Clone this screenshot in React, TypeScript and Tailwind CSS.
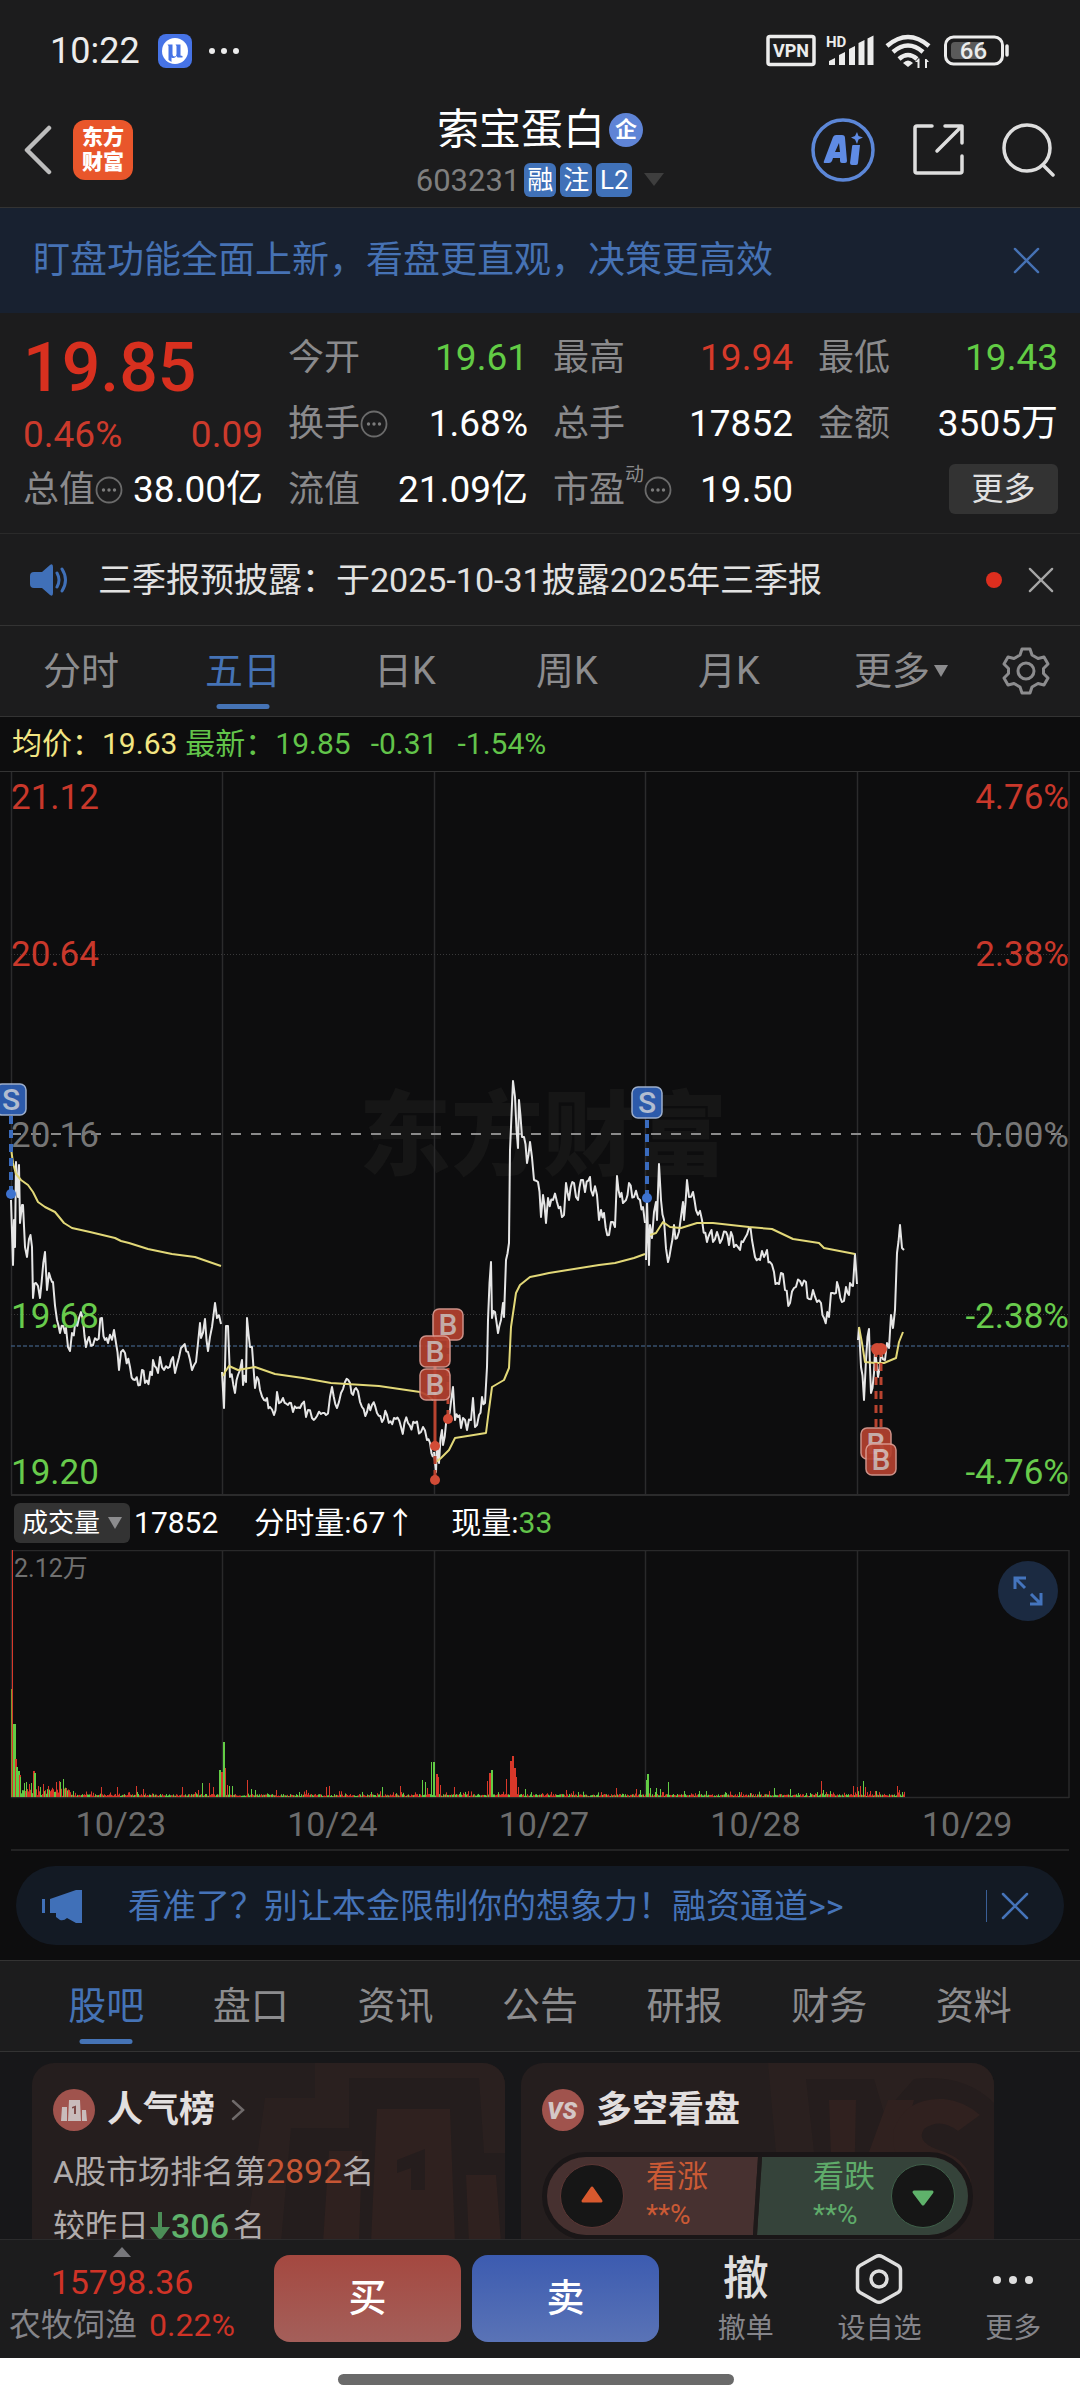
import type { ReactNode } from "react";

type Point = [number, number];

const quotes = [
  { label: "今开", value: "19.61", color: "text-[#62cc45]" },
  { label: "最高", value: "19.94", color: "text-[#d63a2a]" },
  { label: "最低", value: "19.43", color: "text-[#62cc45]" },
  { label: "换手", value: "1.68%", color: "text-white", info: true },
  { label: "总手", value: "17852", color: "text-white" },
  { label: "金额", value: "3505万", color: "text-white" },
  { label: "总值", value: "38.00亿", color: "text-white", info: true },
  { label: "流值", value: "21.09亿", color: "text-white" },
  { label: "市盈", value: "19.50", color: "text-white", info: true, sup: "动" },
];

const periods = ["分时", "五日", "日K", "周K", "月K"];
const sections = ["股吧", "盘口", "资讯", "公告", "研报", "财务", "资料"];
const dates = ["10/23", "10/24", "10/27", "10/28", "10/29"];

const price: Point[][] = [
  [[11,428],[13,493],[14,448],[15,475],[16,390],[18,425],[19,393],[20,451],[22,433],[23,433],[25,475],[27,485],[29,467],[32,475],[33,526],[36,511],[38,514],[40,526],[45,480],[47,518],[49,501],[52,510],[53,510],[57,548],[60,561],[65,561],[66,556],[70,579],[72,561],[79,546],[83,548],[86,575],[89,565],[93,573],[97,568],[102,546],[105,568],[108,571],[114,558],[116,571],[119,598],[121,580],[125,581],[130,595],[135,608],[140,613],[142,598],[145,611],[152,603],[153,588],[158,601],[160,585],[164,598],[168,596],[173,585],[175,601],[183,574],[188,580],[192,598],[196,590],[200,551],[201,566],[205,547],[208,579],[212,555],[215,531],[217,546],[221,552]],
  [[222,600],[224,636],[226,554],[228,554],[230,605],[235,621],[238,603],[240,598],[242,588],[243,613],[246,610],[247,546],[250,575],[252,575],[255,616],[257,605],[260,618],[264,628],[267,626],[270,635],[274,643],[277,620],[281,630],[283,626],[288,633],[291,631],[293,640],[300,636],[308,638],[312,646],[317,644],[321,642],[326,643],[330,625],[332,615],[337,636],[341,621],[345,610],[350,611],[353,623],[356,616],[362,635],[367,640],[372,633],[377,641],[382,650],[387,643],[394,646],[401,655],[408,651],[415,651],[421,660],[423,655],[427,668],[430,671],[433,685]],
  [[434,680],[436,700],[437,671],[439,691],[442,658],[443,673],[448,646],[453,615],[455,648],[458,645],[461,656],[465,648],[467,658],[471,648],[473,626],[475,655],[479,643],[482,625],[485,631],[487,595],[488,548],[491,490],[492,546],[495,540],[498,561],[501,548],[503,531],[504,545],[506,488],[509,471],[510,378],[513,309],[515,325],[518,376],[519,328],[522,365],[524,365],[527,391],[530,370],[534,408],[538,410],[541,445],[543,423],[546,451],[548,426],[553,428],[557,430],[562,445],[564,443],[566,411],[569,428],[574,411],[578,428],[581,408],[585,420],[590,405],[591,418],[597,423],[599,448],[601,438],[604,441],[609,463],[611,450],[615,455],[617,404],[620,425],[623,431],[626,428],[629,411],[634,425],[640,428],[643,435],[645,451]],
  [[646,488],[647,428],[649,493],[650,453],[652,466],[656,430],[657,448],[659,392],[661,428],[664,448],[668,490],[671,475],[674,453],[677,466],[683,430],[684,448],[687,408],[689,425],[693,420],[696,438],[702,448],[707,470],[710,461],[713,470],[717,460],[720,471],[726,460],[729,473],[731,460],[734,475],[740,478],[743,470],[749,456],[752,468],[755,485],[760,488],[762,479],[764,485],[767,478],[770,490],[774,500],[777,511],[781,501],[785,518],[790,531],[794,516],[800,509],[806,510],[809,527],[813,518],[817,530],[821,531],[824,546],[829,545],[831,521],[836,521],[837,510],[842,530],[846,515],[849,523],[850,511],[853,514],[855,482],[857,512]],
  [[858,568],[859,556],[861,595],[864,628],[866,588],[869,557],[870,595],[871,621],[874,601],[875,578],[878,605],[881,581],[885,588],[887,571],[889,576],[891,543],[893,556],[895,538],[897,481],[900,453],[902,476],[904,478]],
];

const average: Point[][] = [
  [[11,376],[13,391],[16,402],[21,408],[28,413],[33,420],[38,430],[45,435],[55,440],[64,451],[72,456],[90,460],[115,466],[121,469],[129,471],[148,477],[172,482],[195,485],[221,494]],
  [[223,604],[225,600],[229,594],[238,598],[255,595],[275,602],[303,606],[331,611],[379,614],[420,620],[427,623],[433,628]],
  [[436,690],[441,686],[449,678],[455,666],[486,661],[488,645],[492,615],[504,608],[509,596],[511,555],[516,521],[520,513],[530,505],[540,503],[549,501],[574,497],[599,493],[615,491],[634,486],[645,482]],
  [[650,463],[656,461],[663,450],[670,455],[681,456],[697,451],[713,451],[749,455],[772,457],[793,467],[819,471],[824,476],[855,482]],
  [[859,555],[862,571],[865,590],[875,591],[884,591],[896,586],[899,570],[903,560]],
];

// deterministic noise so that the chart looks the same on every load
function createRandom(seed: number) {
  let s = seed;
  return () => {
    s = (s * 16807) % 2147483647;
    return s / 2147483647;
  };
}

function smoothPath(points: Point[]) {
  return points.map(([x, y], i) => `${i ? "L" : "M"}${x} ${y}`).join("");
}

function tickPath(points: Point[], seed: number) {
  const rand = createRandom(seed);
  let d = "";
  points.forEach(([x, y], i) => {
    const next = points[i + 1];
    d += `${i ? "L" : "M"}${x} ${y}`;
    if (!next || next[0] - x < 3) return;
    const steps = Math.round((next[0] - x) / 2);
    for (let k = 1; k < steps; k++) {
      const t = k / steps;
      const ny = y + (next[1] - y) * t + (rand() - 0.5) * 16;
      d += `L${(x + (next[0] - x) * t).toFixed(1)} ${ny.toFixed(1)}`;
    }
  });
  return d;
}

const UP = "#d8382a";
const DOWN = "#62cc45";

const peaks: [number, number, string][] = [
  [14,73,DOWN],[15,38,UP],[16,30,DOWN],[18,26,DOWN],[19,22,UP],[20,20,DOWN],[24,14,DOWN],[26,15,DOWN],[29,13,UP],[31,14,DOWN],[33,26,UP],[34,24,DOWN],[38,11,UP],[40,10,DOWN],[43,13,UP],[48,11,UP],[56,15,UP],[59,16,UP],[60,15,DOWN],[63,18,DOWN],[66,9,UP],[101,10,UP],[117,10,UP],[136,11,UP],[143,8,UP],[182,10,UP],[198,7,UP],[202,14,DOWN],[209,14,UP],[213,10,UP],[219,27,DOWN],[221,25,UP],[224,29,UP],[227,12,UP],[229,11,DOWN],[232,11,DOWN],[247,17,UP],[251,8,DOWN],[255,7,DOWN],[276,7,UP],[306,7,UP],[326,10,UP],[329,11,UP],[382,10,DOWN],[400,11,UP],[422,17,DOWN],[425,15,DOWN],[427,9,UP],[436,23,UP],[438,20,UP],[440,12,UP],[454,10,UP],[487,16,UP],[489,24,UP],[491,27,DOWN],[506,18,UP],[510,36,UP],[512,41,UP],[514,29,UP],[516,20,UP],[518,10,UP],[525,8,DOWN],[566,7,UP],[578,5,DOWN],[616,9,UP],[636,8,UP],[640,7,DOWN],[646,17,DOWN],[650,9,DOWN],[656,9,DOWN],[660,8,DOWN],[668,15,DOWN],[684,6,DOWN],[699,6,DOWN],[774,9,DOWN],[790,8,DOWN],[821,16,UP],[823,7,DOWN],[853,11,UP],[857,10,UP],[860,11,UP],[863,16,DOWN],[865,10,UP],[870,6,UP],[875,6,UP],[897,11,UP],[899,7,UP],[902,5,DOWN]];

function VolumeBars() {
  const rand = createRandom(77);
  const bars: ReactNode[] = [];
  for (let x = 12; x < 905; x += 1) {
    const h = (rand() > 0.8 ? 2 + rand() * 4 : 1 + rand() * 2) + (x < 70 ? rand() * 7 : 0);
    bars.push(<rect key={x} x={x} y={247 - h} width="1" height={h} fill={rand() > 0.45 ? UP : DOWN} />);
  }
  return (
    <g>
      {bars}
      {peaks.map(([x, h, c]) => (
        <rect key={`p${x}`} x={x} y={247 - h} width={h > 20 ? 2 : 1} height={h} fill={c} />
      ))}
      <rect x="11" y="139" width="1" height="108" fill="#7f9a2e" />
      <rect x="12" y="0" width="1" height="247" fill={UP} />
      <rect x="13" y="174" width="1" height="73" fill={DOWN} />
      <rect x="223" y="192" width="2" height="55" fill={DOWN} />
      <rect x="431" y="212" width="1" height="35" fill={DOWN} />
      <rect x="433" y="212" width="2" height="35" fill={DOWN} />
      <rect x="647" y="224" width="2" height="23" fill={DOWN} />
    </g>
  );
}

function Marker({ x, y, kind }: { x: number; y: number; kind: "B" | "S" }) {
  return (
    <g opacity="0.92">
      <rect x={x - 15} y={y - 15} width="30" height="31" rx="6" fill={kind === "S" ? "#2f61b8" : "#b3412f"} stroke={kind === "S" ? "#a9bcdc" : "#dd9c92"} strokeWidth="1.5" />
      <text x={x} y={y + 11} textAnchor="middle" fontSize="30" fontWeight="500" fill={kind === "S" ? "#bfcbe0" : "#d3b9b5"}>
        {kind}
      </text>
    </g>
  );
}

function PriceChart() {
  return (
    <svg viewBox="0 0 1080 724" className="block w-full" role="img" aria-label="五日走势">
      <text x="543" y="396" textAnchor="middle" fontSize="92" fontWeight="900" fill="#161616">东方财富</text>
      <g stroke="#2b2b2c" strokeWidth="1.5">
        <path d="M11.5 0V723M222.5 0V723M434.5 0V723M645.5 0V723M857.5 0V723M1069 0V723" />
        <path d="M11 723H1069" strokeWidth="2" />
      </g>
      <path d="M11 182.500H1069M11 542.500H1069" stroke="#39393a" strokeDasharray="1 2" />
      <path d="M11 362H1069" stroke="#8a8a8a" strokeWidth="2" strokeDasharray="10 10" />
      <path d="M11 574H1069" stroke="#37506f" strokeWidth="1.500" strokeDasharray="4 2" />

      {price.map((day, i) => (
        <path key={i} d={tickPath(day, 31 + i * 17)} fill="none" stroke="#e6e6e6" strokeWidth="2" strokeLinejoin="round" />
      ))}
      {average.map((day, i) => (
        <path key={i} d={smoothPath(day)} fill="none" stroke="#e2d878" strokeWidth="2" strokeLinejoin="round" />
      ))}

      <g fontSize="35">
        <g fill="#c9382b">
          <text x="11" y="37">21.12</text>
          <text x="11" y="194">20.64</text>
          <text x="1069" y="37" textAnchor="end">4.76%</text>
          <text x="1069" y="194" textAnchor="end">2.38%</text>
        </g>
        <g fill="#767676">
          <text x="11" y="375">20.16</text>
          <text x="1069" y="375" textAnchor="end">0.00%</text>
        </g>
        <g fill="#68cb4c">
          <text x="11" y="556">19.68</text>
          <text x="11" y="712">19.20</text>
          <text x="1069" y="556" textAnchor="end">-2.38%</text>
          <text x="1069" y="712" textAnchor="end">-4.76%</text>
        </g>
      </g>

      <g stroke="#3a6bbd" strokeWidth="4" strokeDasharray="8 6">
        <path d="M11 344V422M647 348V426" />
      </g>
      <g stroke="#b8432f" strokeWidth="3">
        <path d="M435 594V674" />
        <path d="M435 684V708M448 568V647M876 577V658M881 577V674" strokeDasharray="8 6" />
      </g>
      <g fill="#3d72cf">
        <circle cx="11" cy="422" r="5" />
        <circle cx="647" cy="426" r="5" />
      </g>
      <g fill="#d14b36">
        <circle cx="448" cy="647" r="5" />
        <circle cx="435" cy="674" r="5" />
        <circle cx="435" cy="708" r="5" />
        <circle cx="877" cy="577" r="6" />
        <circle cx="881" cy="577" r="6" />
      </g>
      <Marker x={11} y={327} kind="S" />
      <Marker x={647} y={330} kind="S" />
      <Marker x={448} y={552} kind="B" />
      <Marker x={435} y={579} kind="B" />
      <Marker x={435} y={612} kind="B" />
      <Marker x={876} y={671} kind="B" />
      <Marker x={881} y={687} kind="B" />
    </svg>
  );
}

function InfoDots() {
  return (
    <svg viewBox="0 0 28 28" className="size-7 shrink-0" aria-hidden="true">
      <circle cx="14" cy="14" r="12.500" fill="none" stroke="#6b6b6b" strokeWidth="1.800" />
      <g fill="#7c7c7c">
        <circle cx="8.500" cy="14" r="1.700" />
        <circle cx="14" cy="14" r="1.700" />
        <circle cx="19.500" cy="14" r="1.700" />
      </g>
    </svg>
  );
}

function Close({ className }: { className: string }) {
  return (
    <svg viewBox="0 0 28 28" className={className} fill="none" stroke="currentColor" strokeWidth="2.500" strokeLinecap="round" aria-hidden="true">
      <path d="M2 2L26 26M26 2L2 26" />
    </svg>
  );
}

function StatusBar() {
  return (
    <div className="flex h-[93px] items-center justify-between pt-2 pl-[50px] pr-[71px] text-[#ececec]">
      <div className="flex items-center">
        <span className="text-[36px] leading-none">10:22</span>
        <svg viewBox="0 0 34 34" className="ml-[18px] size-[34px]" aria-hidden="true">
          <rect width="34" height="34" rx="8" fill="#4673e6" />
          <circle cx="17" cy="17" r="13" fill="#fff" />
          <path d="M9.500 10.500H14.500V20Q14.500 22.500 16.500 22.500Q18.500 22.500 18.500 20V12L17.500 10.500H22.500V21.500L24.500 22V23.500H19.500L18.500 22Q16.500 25 13.500 23.500V28L10.500 26V12z" fill="#4673e6" />
        </svg>
        <svg viewBox="0 0 32 8" className="ml-4 h-2 w-8" fill="currentColor" aria-hidden="true">
          <circle cx="4" cy="4" r="3" />
          <circle cx="16" cy="4" r="3" />
          <circle cx="28" cy="4" r="3" />
        </svg>
      </div>
      <svg viewBox="0 0 244 36" className="h-9 w-[244px]" fill="none" stroke="currentColor" aria-label="VPN HD 66">
        <rect x="3" y="3.500" width="46" height="28" rx="2" strokeWidth="3.500" />
        <g fill="currentColor" stroke="none">
          <text x="26" y="24" textAnchor="middle" fontSize="18" fontWeight="700">VPN</text>
          <text x="61" y="14" fontSize="15" fontWeight="700">HD</text>
          <path d="M64 32v-4l6-3v7zM74 32v-10l6-3v13zM84 32V16l6-3v19zM93.500 32V10l6-3v25zM102.500 32V5.500l6-3V32z" />
          <path d="M143 34l-5-4q5-5 10 0z" />
          <path d="M154 25l-4 4h2.500v6h2v-9zM160 35v-9h1.500l2.500 3h-2v6z" />
        </g>
        <g strokeWidth="4.500">
          <path d="M122 13q21-18 42 0M128 19q15-13 30 0M134 26q9-8 18 0" />
        </g>
        <rect x="180.500" y="4" width="57" height="27" rx="8" strokeWidth="3" />
        <rect x="186" y="9" width="32" height="17" rx="4" fill="#5a5a5a" stroke="none" />
        <path d="M242 13v9" strokeWidth="3.500" strokeLinecap="round" />
        <text x="208.500" y="26" textAnchor="middle" fontSize="24" fontWeight="500" fill="currentColor" stroke="none">66</text>
      </svg>
    </div>
  );
}

function Header() {
  return (
    <header className="grid h-[115px] grid-cols-[1fr_auto_1fr] items-center border-b border-[#333] px-6">
      <div className="flex items-center gap-[21px]">
        <button type="button" aria-label="返回">
          <svg viewBox="0 0 28 50" className="h-[50px] w-7" fill="none" stroke="#bdbdbd" strokeWidth="4.500" strokeLinecap="round" strokeLinejoin="round">
            <path d="M25 3L3 25L25 47" />
          </svg>
        </button>
        <a href="#home" className="flex size-[60px] flex-col items-center justify-center rounded-xl bg-[#e9562b] text-[21px] leading-[25px] font-black text-white">
          <span>东方</span>
          <span>财富</span>
        </a>
      </div>
      <div className="flex flex-col items-center">
        <h1 className="flex h-[60px] items-center gap-1 pt-1 text-[42px] leading-none text-white">
          索宝蛋白
          <span className="flex size-[34px] items-center justify-center rounded-full bg-[#5f84d6] text-[22px] font-bold">企</span>
        </h1>
        <div className="flex h-11 items-center gap-1 text-[26px] leading-none text-white">
          <span className="text-[31px] text-[#7f7f7f]">603231</span>
          <span className="flex h-[34px] w-8 items-center justify-center rounded-md bg-[#4071b8]">融</span>
          <span className="flex h-[34px] w-8 items-center justify-center rounded-md bg-[#4071b8]">注</span>
          <span className="flex h-[34px] w-9 items-center justify-center rounded-md bg-[#4071b8]">L2</span>
          <svg viewBox="0 0 20 14" className="ml-2 h-[14px] w-5" aria-hidden="true"><path d="M0 0H20L10 13z" fill="#3e3e3e" /></svg>
        </div>
      </div>
      <div className="flex items-center justify-end gap-9">
        <button type="button" aria-label="Ai">
          <svg viewBox="0 0 66 66" className="size-[66px]">
            <circle cx="33" cy="33" r="30" fill="none" stroke="#5c87d8" strokeWidth="3.500" />
            <path fillRule="evenodd" d="M14 44L23 20q1-2 3-2h6q3 0 3 3l2 23q0 2-2 2h-3q-2 0-2-2v-3h-7l-1 3q-1 2-3 2h-4q-2 0-1-2zM25 35h5l-1-9z" fill="#5f8be4" />
            <path d="M43 28h7l-2 18q0 2-2 2h-4q-2 0-2-2l2-16q0-2 1-2zM47 15l1.500 4l4.500 1.500l-4.500 2L47 27l-2-4.500l-4-2l4-1.500z" fill="#5f8be4" />
          </svg>
        </button>
        <button type="button" aria-label="分享">
          <svg viewBox="0 0 54 54" className="size-[54px]" fill="none" stroke="#dedede" strokeWidth="3.500" strokeLinecap="round" strokeLinejoin="round">
            <path d="M20 3H5Q3 3 3 5V48Q3 50 5 50H48Q50 50 50 48V33M33 3H50V20M50 3L25 28" />
          </svg>
        </button>
        <button type="button" aria-label="搜索">
          <svg viewBox="0 0 54 54" className="size-[54px]" fill="none" stroke="#dedede" strokeWidth="3.500" strokeLinecap="round">
            <circle cx="25" cy="25" r="23" />
            <path d="M41 42L51 52" />
          </svg>
        </button>
      </div>
    </header>
  );
}

function QuotePanel() {
  return (
    <section className="grid grid-cols-4 gap-x-[25px] border-b border-[#2a2a2a] py-[11px] pr-[22px] pl-[23px] whitespace-nowrap">
      <div className="row-span-2 text-[#d8301f]">
        <div className="flex h-[88px] items-center text-[68px] leading-none font-medium">19.85</div>
        <div className="flex h-11 items-center justify-between text-[37px] leading-none text-[#cc3a2c]">
          <span>0.46%</span>
          <span>0.09</span>
        </div>
      </div>
      {quotes.map((q) => (
        <div key={q.label} className="flex h-[66px] items-center justify-between pt-[2px]">
          <span className="flex items-center text-[36px] text-[#8a8a8c]">
            {q.label}
            {q.sup && <sup className="top-0 self-start text-[19px] leading-6">{q.sup}</sup>}
            {q.info && <InfoDots />}
          </span>
          <span className={`text-[37px] ${q.color}`}>{q.value}</span>
        </div>
      ))}
      <div className="flex h-[66px] items-center justify-end">
        <button type="button" className="h-[50px] w-[109px] rounded-md bg-[#333] text-[32px] leading-none text-[#e0e0e0]">更多</button>
      </div>
    </section>
  );
}

function Tab({ label, active }: { label: string; active?: boolean }) {
  return (
    <button type="button" className={`relative flex h-full flex-1 items-center justify-center text-[38px] leading-none ${active ? "text-[#4573b5]" : "text-[#8c8c8e]"}`}>
      {label}
      {active && <span className="absolute bottom-[7px] left-1/2 h-[5px] w-[53px] -translate-x-1/2 rounded-full bg-[#4573b5]" />}
    </button>
  );
}

function RankCard() {
  return (
    <article className="relative h-[240px] flex-1 overflow-hidden rounded-[22px] bg-[#251e1e] px-[21px] pt-5">
      <svg viewBox="0 0 260 180" className="absolute top-0 right-0 h-[180px] w-[260px]" aria-hidden="true">
        <path d="M70 0H260V180H0L20 35H70z" fill="#2a201f" />
        <path d="M104 15H234L239 90H260V180H36L46 65H104z" fill="#241d1d" />
        <path d="M132 46H205L210 180H126zM84 88H117L114 180H78zM221 112H251L256 180H224z" fill="#2f211f" />
        <path d="M152 97L180 86V127H166V105L152 110z" fill="#251d1d" />
      </svg>
      <div className="relative">
        <h2 className="flex h-[54px] items-center text-[36px] font-bold text-[#e2dfdf]">
          <svg viewBox="0 0 42 42" className="mr-3 size-[42px]" aria-hidden="true">
            <circle cx="21" cy="21" r="21" fill="#a0534d" />
            <path d="M9 18h5v14H8zM16 11h11l1 21H15zM29 21h4l1 11h-5z" fill="#c9bcbb" />
            <path d="M19 18l4-1.500V25h-2v-6l-2 .5z" fill="#7d4a47" />
          </svg>
          人气榜
          <svg viewBox="0 0 14 22" className="ml-4 h-[22px] w-[14px]" fill="none" stroke="#6f6a6a" strokeWidth="2.500" strokeLinecap="round" aria-hidden="true"><path d="M2 2L12 11L2 20" /></svg>
        </h2>
        <p className="mt-1 h-[58px] text-[32px] leading-[60px] text-[#b0abab]">
          A股市场排名第<span className="text-[34px] text-[#c65634]">2892</span>名
        </p>
        <p className="flex h-[54px] items-center text-[32px] text-[#b0abab]">
          较昨日
          <svg viewBox="0 0 22 28" className="h-7 w-[22px]" fill="#4c8d57" aria-label="下降"><path d="M9 0H13V15H21L13 26Q11 28 9 26L1 15H9z" /></svg>
          <span className="mr-1 text-[34px] font-medium text-[#5fb26b]">306</span>名
        </p>
      </div>
    </article>
  );
}

function VoteCard() {
  return (
    <article className="relative h-[240px] flex-1 overflow-hidden rounded-[22px] bg-[#251e1e] px-[21px] pt-5">
      <svg viewBox="0 0 230 180" className="absolute top-0 right-0 h-[180px] w-[230px]" aria-hidden="true">
        <path d="M4 0H230V180H20z" fill="#2a201f" />
        <path d="M42 16H110L120 50L150 16Q200 10 230 40V180H60z" fill="#251d1d" />
        <path d="M65 37H92L90 130L124 37H150L110 180H70z" fill="#30211f" />
        <path d="M216 52L194 68Q176 54 160 66Q152 78 172 86Q214 98 206 134Q194 176 140 168L146 144Q174 150 178 132Q178 122 158 114Q124 100 130 66Q142 34 180 36Q200 38 216 52z" fill="#30211f" />
      </svg>
      <div className="relative">
        <h2 className="flex h-[54px] items-center text-[36px] font-bold text-[#e2dfdf]">
          <svg viewBox="0 0 42 42" className="mr-3 size-[42px]" aria-hidden="true">
            <circle cx="21" cy="21" r="21" fill="#a0534d" />
            <text x="20" y="30" textAnchor="middle" fontSize="24" fontWeight="900" fontStyle="italic" fill="#d4c7c6">VS</text>
          </svg>
          多空看盘
        </h2>
        <div className="relative mt-[15px] h-[88px] rounded-full border-[5px] border-[#1a1617] text-[31px]">
          <svg viewBox="0 0 421 78" preserveAspectRatio="none" className="absolute inset-0 size-full" aria-hidden="true">
            <path d="M39 0H211L206 78H39A39 39 0 0 1 39 0z" fill="#473130" />
            <path d="M215 0H382A39 39 0 0 1 382 78H210z" fill="#35433a" />
            <path d="M211 0H215L210 78H206z" fill="#1e1a1a" />
          </svg>
          <div className="relative flex h-full items-center justify-between px-[13px]">
            <button type="button" className="flex items-center gap-[22px] text-left text-[#cb5a35]">
              <svg viewBox="0 0 64 64" className="size-16" aria-hidden="true">
                <circle cx="32" cy="32" r="31.500" fill="#161616" stroke="#5b3735" strokeWidth="1" />
                <path d="M32 24L41 37H23z" fill="#d8592e" stroke="#d8592e" strokeWidth="3" strokeLinejoin="round" />
              </svg>
              <span className="flex flex-col">
                <span className="leading-[38px]">看涨</span>
                <span className="text-[28px] leading-[38px]">**%</span>
              </span>
            </button>
            <button type="button" className="flex items-center gap-4 text-left text-[#5fab6a]">
              <span className="flex flex-col">
                <span className="leading-[38px]">看跌</span>
                <span className="text-[28px] leading-[38px]">**%</span>
              </span>
              <svg viewBox="0 0 64 64" className="size-16" aria-hidden="true">
                <circle cx="32" cy="32" r="31.500" fill="#161616" stroke="#3f5f49" strokeWidth="1" />
                <path d="M32 40L41 28H23z" fill="#5fb26b" stroke="#5fb26b" strokeWidth="3" strokeLinejoin="round" />
              </svg>
            </button>
          </div>
        </div>
      </div>
    </article>
  );
}

function TradeBar() {
  return (
    <footer className="grid h-[119px] shrink-0 grid-cols-[264fr_395fr_421fr] border-t border-[#2b2b2c] bg-[#1c1c1d] whitespace-nowrap">
      <a href="#index" className="flex flex-col items-center pt-[7px] pr-5 text-[#cf3327]">
        <svg viewBox="0 0 18 10" className="h-[10px] w-[18px]" aria-hidden="true"><path d="M0 10L9 0L18 10z" fill="#77777b" /></svg>
        <span className="mt-1 text-[34px] leading-[43px]">15798.36</span>
        <span className="text-[32px] leading-[43px]">
          <span className="mr-3 text-[#85858a]">农牧饲渔</span>0.22%
        </span>
      </a>
      <div className="flex gap-[11px] pt-[15px] pb-4 pl-[10px] text-[38px] font-medium text-white">
        <button type="button" className="flex-1 rounded-2xl bg-linear-to-b from-[#a44840] to-[#a45f5a]">买</button>
        <button type="button" className="flex-1 rounded-2xl bg-linear-to-b from-[#3c5bb0] to-[#5a73b6]">卖</button>
      </div>
      <div className="grid grid-cols-3 pt-[14px] pl-5 text-[28px] text-[#85858a]">
        <button type="button" className="flex flex-col items-center">
          <span className="h-[52px] text-[46px] leading-[48px] font-medium text-[#dedede]">撤</span>
          <span className="leading-[46px]">撤单</span>
        </button>
        <button type="button" className="flex flex-col items-center">
          <svg viewBox="0 0 48 52" className="h-[52px] w-12" fill="none" stroke="#dedede" strokeWidth="3.500" strokeLinejoin="round" aria-hidden="true">
            <path d="M21 2.500Q24 1 27 2.500L43 11.500Q45.500 13 45.500 16V34Q45.500 37 43 38.500L27 47.500Q24 49 21 47.500L5 38.500Q2.500 37 2.500 34V16Q2.500 13 5 11.500z" />
            <circle cx="24" cy="25" r="8" />
          </svg>
          <span className="leading-[46px]">设自选</span>
        </button>
        <button type="button" className="flex flex-col items-center">
          <svg viewBox="0 0 44 52" className="h-[52px] w-11" fill="#dedede" aria-hidden="true">
            <circle cx="6" cy="26" r="4" />
            <circle cx="22" cy="26" r="4" />
            <circle cx="38" cy="26" r="4" />
          </svg>
          <span className="leading-[46px]">更多</span>
        </button>
      </div>
    </footer>
  );
}

export default function App() {
  return (
    <div className="flex h-screen flex-col overflow-hidden bg-[#1c1c1d] font-[Roboto,'Noto_Sans_CJK_SC',sans-serif]">
      <StatusBar />
      <Header />
      <main className="min-h-0 flex-1 overflow-hidden">
        <div className="flex h-[105px] items-center justify-between bg-[#182130] pr-10 pl-[33px] text-[#4672b4]">
          <p className="text-[37px] leading-none">盯盘功能全面上新，看盘更直观，决策更高效</p>
          <button type="button" aria-label="关闭"><Close className="size-[27px]" /></button>
        </div>

        <QuotePanel />

        <div className="flex h-[92px] items-center border-b border-[#333] pr-[26px] pl-[30px]">
          <svg viewBox="0 0 38 32" className="h-8 w-[38px]" fill="#4070b8" aria-hidden="true">
            <path d="M4 8h8L20 1q3-2 3 2v26q0 4-3 2L12 24H4q-4 0-4-4v-8q0-4 4-4z" />
            <path d="M27 9q4 7 0 14M32 5q7 11 0 22" fill="none" stroke="#4070b8" strokeWidth="3" strokeLinecap="round" />
          </svg>
          <p className="ml-[30px] flex-1 text-[34px] leading-none text-[#e2e2e2]">三季报预披露：于2025-10-31披露2025年三季报</p>
          <span className="size-4 rounded-full bg-[#dc2e1e]" />
          <button type="button" aria-label="关闭" className="ml-[26px] text-[#a5a5a5]"><Close className="size-[26px]" /></button>
        </div>

        <nav className="flex h-[91px] items-center border-b border-[#333]">
          {periods.map((p) => (
            <Tab key={p} label={p} active={p === "五日"} />
          ))}
          <button type="button" className="flex flex-1 justify-center text-[38px] leading-none text-[#8c8c8e]">
            <span className="flex items-center gap-1 pl-5">
              更多
              <svg viewBox="0 0 14 12" className="h-3 w-[14px]" aria-hidden="true"><path d="M0 0H14L7 12z" fill="#8c8c8e" /></svg>
            </span>
          </button>
          <button type="button" aria-label="设置" className="flex w-[108px] justify-center">
            <svg viewBox="0 0 48 48" className="size-12" fill="none" stroke="#8c8c8e" strokeWidth="3" strokeLinejoin="round">
              <path d="M20 2H28L30 8L36 11.500L42 10L46 17L41.500 21.500V26.500L46 31L42 38L36 36.500L30 40L28 46H20L18 40L12 36.500L6 38L2 31L6.500 26.500V21.500L2 17L6 10L12 11.500L18 8z" />
              <circle cx="24" cy="24" r="8" />
            </svg>
          </button>
        </nav>

        <section className="bg-[#0d0d0e]">
          <div className="flex h-[55px] items-center border-b border-[#333] pl-3 text-[30px] leading-none whitespace-nowrap text-[#62c44a]">
            <span className="text-[#f2e583]">均价：19.63</span>
            <span className="ml-2">最新：19.85</span>
            <span className="ml-5">-0.31</span>
            <span className="ml-5">-1.54%</span>
          </div>
          <PriceChart />
          <div className="flex h-[54px] items-center pl-[14px] text-[30px] leading-none whitespace-nowrap text-white">
            <button type="button" className="flex h-10 items-center gap-2 rounded-md bg-[#333] px-2 text-[26px] leading-none">
              成交量
              <svg viewBox="0 0 14 12" className="h-3 w-[14px]" aria-hidden="true"><path d="M0 0H14L7 12z" fill="#8c8c8e" /></svg>
            </button>
            <span className="ml-1">17852</span>
            <span className="ml-9">分时量:67↑</span>
            <span className="ml-9">现量:<span className="text-[#62c44a]">33</span></span>
          </div>
          <div className="relative">
            <svg viewBox="0 0 1080 249" className="block w-full" role="img" aria-label="成交量">
              <path d="M11 0.500H1069M11.500 0V248M222.500 0V248M434.500 0V248M645.500 0V248M857.500 0V248M1069 0V248M11 247.500H1069" stroke="#29292a" strokeWidth="1.500" fill="none" />
              <VolumeBars />
              <text x="14" y="27" fontSize="25" fill="#707070">2.12万</text>
            </svg>
            <button type="button" aria-label="全屏" className="absolute top-[11px] right-[22px] flex size-[60px] items-center justify-center rounded-full bg-[#1b2a41]">
              <svg viewBox="0 0 30 30" className="size-[30px]" fill="none" stroke="#4474bd" strokeWidth="3">
                <path d="M2 13V2H13M2 2L12 12M28 17V28H17M28 28L18 18" />
              </svg>
            </button>
          </div>
          <div className="mx-[11px] flex h-[52px] items-center border-b-2 border-[#232324] text-[34px] leading-none text-[#6c6c6c]">
            {dates.map((d) => (
              <span key={d} className="flex-1 pl-2 text-center">{d}</span>
            ))}
          </div>
          <div className="px-4 pt-[15px] pb-[15px]">
            <div className="flex h-[79px] items-center rounded-full bg-[#131a24] pr-[35px] pl-[26px] text-[#4573b8]">
              <svg viewBox="0 0 40 34" className="h-[34px] w-10" fill="#4070b8" aria-hidden="true">
                <path d="M0 10H3V24H0zM8 10L34 1H40V34H34L25 29Q22 32 18 31L14 28V24H8z" />
              </svg>
              <p className="ml-[46px] flex-1 text-[34px] leading-none">看准了？别让本金限制你的想象力！融资通道&gt;&gt;</p>
              <span className="h-8 w-px bg-[#3a5f97]" />
              <button type="button" aria-label="关闭" className="ml-[14px]"><Close className="size-7" /></button>
            </div>
          </div>
        </section>

        <nav className="flex h-[92px] items-center border-y border-[#333] px-[34px]">
          {sections.map((s) => (
            <Tab key={s} label={s} active={s === "股吧"} />
          ))}
        </nav>

        <section className="flex gap-4 bg-[#171719] pt-[11px] pr-[86px] pl-8 whitespace-nowrap">
          <RankCard />
          <VoteCard />
        </section>
      </main>
      <TradeBar />
      <div className="flex h-[42px] shrink-0 items-center justify-center bg-white pr-2">
        <div className="h-[11px] w-[37%] rounded-full bg-[#6a6a6a]" />
      </div>
    </div>
  );
}
